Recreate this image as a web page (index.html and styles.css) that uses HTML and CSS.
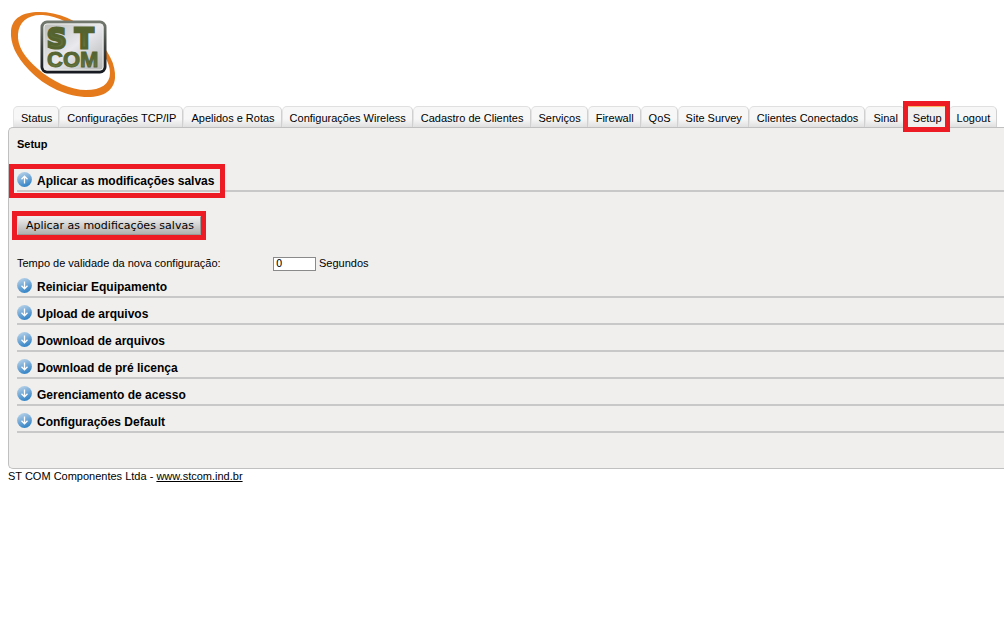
FILE: index.html
```html
<!DOCTYPE html>
<html lang="pt-BR">
<head>
    <meta charset="UTF-8">
    <meta name="viewport" content="width=device-width, initial-scale=1.0">
    <title>ST COM - Setup</title>
    <link rel="stylesheet" href="styles.css">
</head>
<body>

    <!-- section arrow, turned upwards when the section is open -->
    <svg width="0" height="0" class="defs" aria-hidden="true">
        <defs>
            <linearGradient id="ball" x1="0" y1="0" x2="0.4" y2="1">
                <stop offset="0" stop-color="#c3daec"/>
                <stop offset="0.5" stop-color="#7fb0da"/>
                <stop offset="1" stop-color="#3a88c8"/>
            </linearGradient>
        </defs>
        <symbol id="arrow" viewBox="0 0 15 15">
            <path d="M7.5 3.5v7M4.5 7.8l3 3 3-3" fill="none" stroke="#fff" stroke-width="1.3"/>
        </symbol>
        <symbol id="disc" viewBox="0 0 15 15">
            <circle cx="7.5" cy="7.5" r="7.4" fill="url(#ball)"/>
        </symbol>
    </svg>

    <header class="header">
        <svg class="logo" viewBox="0 0 110 90" role="img" aria-label="ST COM">
            <defs>
                <linearGradient id="plate" x1="0" y1="0" x2="1" y2="1">
                    <stop offset="0" stop-color="#b9bbb8"/>
                    <stop offset="0.5" stop-color="#e9e9ee"/>
                    <stop offset="1" stop-color="#aeb0ae"/>
                </linearGradient>
                <linearGradient id="frame" x1="0" y1="0" x2="0" y2="1">
                    <stop offset="0" stop-color="#73786f"/>
                    <stop offset="0.5" stop-color="#3d4240"/>
                    <stop offset="1" stop-color="#171a20"/>
                </linearGradient>
                <linearGradient id="green" x1="0" y1="0" x2="0" y2="1">
                    <stop offset="0" stop-color="#4c5a2c"/>
                    <stop offset="1" stop-color="#6d7d43"/>
                </linearGradient>
            </defs>
            <path fill="#e47a1c" fill-rule="evenodd" d="M31 4C50 4 69 12 84 26C101 42 108 57 107 70C106 82 96 89 80 89C60 89 37 79 21 62C8 49 2 35 3 23C4 10 15 4 31 4ZM35 7C20 6 11 14 10 26C9 38 17 50 30 61C45 74 63 82 78 82C93 82 102 76 102 65C102 54 94 41 80 29C67 17 50 8 35 7Z"/>
            <rect x="34" y="14" width="63" height="50" rx="5" fill="url(#plate)" stroke="url(#frame)" stroke-width="3"/>
            <rect x="36" y="16" width="59" height="46" rx="3" fill="none" stroke="#eceeea" stroke-width="1"/>
            <g class="logo-text">
                <text class="logo-big" x="39" y="40">S</text>
                <text class="logo-big" x="67" y="40">T</text>
                <text class="logo-small" x="39" y="59">COM</text>
            </g>
        </svg>
    </header>

    <nav class="tabs">
        <a class="tab" href="#status">Status</a>
        <a class="tab" href="#tcpip">Configurações TCP/IP</a>
        <a class="tab" href="#apelidos">Apelidos e Rotas</a>
        <a class="tab" href="#wireless">Configurações Wireless</a>
        <a class="tab" href="#clientes">Cadastro de Clientes</a>
        <a class="tab" href="#servicos">Serviços</a>
        <a class="tab" href="#firewall">Firewall</a>
        <a class="tab" href="#qos">QoS</a>
        <a class="tab" href="#survey">Site Survey</a>
        <a class="tab" href="#conectados">Clientes Conectados</a>
        <a class="tab" href="#sinal">Sinal</a>
        <a class="tab active" href="#setup">Setup</a>
        <a class="tab" href="#logout">Logout</a>
    </nav>

    <main class="panel">
        <h1 class="title">Setup</h1>

        <details class="section" open>
            <summary class="section-head"><span class="section-label marked"><svg class="icon"><use href="#disc"/><use class="arrow" href="#arrow"/></svg>Aplicar as modificações salvas</span></summary>
            <form class="section-body">
                <button class="button marked" type="button">Aplicar as modificações salvas</button>
                <div class="field">
                    <label class="field-label" for="tempo">Tempo de validade da nova configuração:</label>
                    <input class="field-input" id="tempo" type="text" value="0">
                    <span>Segundos</span>
                </div>
            </form>
        </details>
        <details class="section">
            <summary class="section-head"><span class="section-label"><svg class="icon"><use href="#disc"/><use class="arrow" href="#arrow"/></svg>Reiniciar Equipamento</span></summary>
        </details>
        <details class="section">
            <summary class="section-head"><span class="section-label"><svg class="icon"><use href="#disc"/><use class="arrow" href="#arrow"/></svg>Upload de arquivos</span></summary>
        </details>
        <details class="section">
            <summary class="section-head"><span class="section-label"><svg class="icon"><use href="#disc"/><use class="arrow" href="#arrow"/></svg>Download de arquivos</span></summary>
        </details>
        <details class="section">
            <summary class="section-head"><span class="section-label"><svg class="icon"><use href="#disc"/><use class="arrow" href="#arrow"/></svg>Download de pré licença</span></summary>
        </details>
        <details class="section">
            <summary class="section-head"><span class="section-label"><svg class="icon"><use href="#disc"/><use class="arrow" href="#arrow"/></svg>Gerenciamento de acesso</span></summary>
        </details>
        <details class="section">
            <summary class="section-head"><span class="section-label"><svg class="icon"><use href="#disc"/><use class="arrow" href="#arrow"/></svg>Configurações Default</span></summary>
        </details>
    </main>

    <footer class="footer">ST COM Componentes Ltda - <a class="footer-link" href="http://www.stcom.ind.br">www.stcom.ind.br</a></footer>

</body>
</html>
```
FILE: styles.css
```css
body {
    margin: 8px 0 8px 8px;
    background-color: #fff;
    color: #000;
    font-family: Arial, "Liberation Sans", sans-serif;
    font-size: 11px;
    line-height: 15px;
}
.defs {
    position: absolute;
}
.header {
    height: 98px;
}
.logo {
    display: block;
    width: 110px;
    height: 90px;
}
.logo-text {
    fill: url(#green);
    stroke: #55642f;
    font-weight: bold;
}
.logo-big {
    font-family: "DejaVu Sans", sans-serif;
    font-size: 27px;
    stroke-width: 3px;
}
.logo-small {
    font-family: Arial, "Liberation Sans", sans-serif;
    font-size: 22px;
    stroke-width: 1px;
}
.tabs {
    display: flex;
    padding-left: 5px;
}
.tab {
    padding: 4px 6px 1px 7px;
    border: 1px solid #d0d0d0;
    border-top-color: #e0e0e0;
    border-left-color: #e4e4e4;
    border-bottom: none;
    border-radius: 5px 5px 0 0;
    background: linear-gradient(#f7f7f7 60%, #e0e0e0);
    color: #000;
    text-decoration: none;
    white-space: nowrap;
}
.active {
    position: relative;
    border-top-color: #f9b868;
    background: #f0efed;
}
/* red frame over the current tab */
.active::after {
    content: "";
    position: absolute;
    inset: -6px -2px -5px -3px;
    border: 5px solid #ed1c24;
}
.marked {
    outline: 5px solid #ed1c24;
}
.panel {
    padding: 9px 0 28px 8px;
    border: 1px solid #c0c0c0;
    border-right: none;
    border-radius: 5px 0 0 5px;
    background-color: #f0efed;
}
.title {
    margin: 0 0 20px;
    font-size: 11px;
    line-height: 15px;
}
.section {
    margin-bottom: 7px;
}
.section-head {
    display: flex;
    border-bottom: 2px solid #c8c8c8;
    font-size: 12px;
    font-weight: bold;
    line-height: 18px;
    cursor: pointer;
    list-style: none;
}
.section-label {
    display: flex;
    gap: 5px;
    padding-right: 3px;
}
.section-label.marked {
    outline-offset: 3px;
}
.icon {
    width: 15px;
    height: 15px;
}
.arrow {
    transform-box: view-box;
    transform-origin: center;
}
.section[open] .arrow {
    transform: rotate(180deg);
}
.section-body {
    padding-top: 24px;
}
.button {
    display: block;
    height: 19px;
    padding: 0 6px 0 8px;
    border: 1px solid #999;
    border-top-color: #eee;
    border-left-color: #ddd;
    background: linear-gradient(#efefef, #b0b0b0);
    color: #000;
    font-family: "DejaVu Sans", sans-serif;
    font-size: 11px;
    line-height: 17px;
}
.field {
    display: flex;
    align-items: center;
    gap: 3px;
    margin-top: 21px;
}
.field-label {
    width: 253px;
}
.field-input {
    box-sizing: border-box;
    width: 43px;
    height: 14px;
    padding: 0 2px;
    border: 1px solid #8a8a8a;
    background-color: #fff;
    font-family: "DejaVu Sans", sans-serif;
    font-size: 10px;
}
.footer-link {
    color: #000;
}
```
